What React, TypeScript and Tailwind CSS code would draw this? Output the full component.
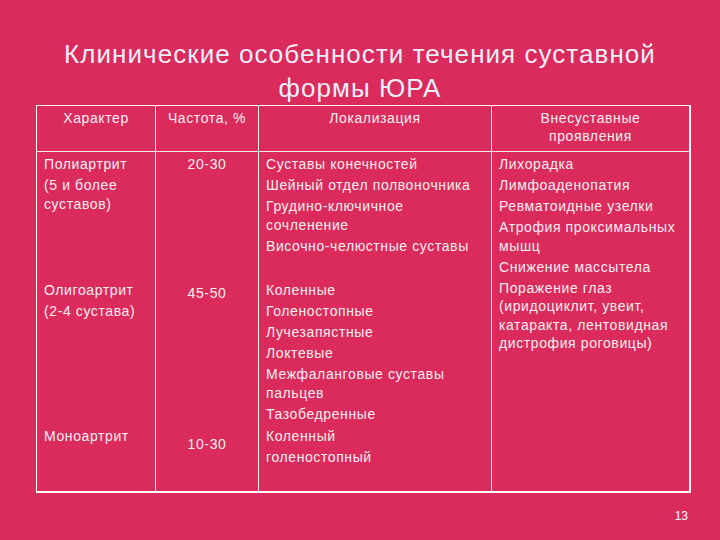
import React from "react";

const font = { fontFamily: '"Liberation Sans", Arial, sans-serif' };

function Lines({ items }: { items: React.ReactNode[] }) {
  return (
    <div className="flex flex-col gap-[2.5px]">
      {items.map((t, i) => (
        <div key={i} className="whitespace-nowrap">{t}</div>
      ))}
    </div>
  );
}

export default function App() {
  const cell = "border-r border-white/90 px-[7px] pt-[3px]";
  return (
    <div
      className="w-[720px] h-[540px] bg-[#db2a5c] flex flex-col text-[#f3eef2] overflow-hidden"
      style={font}
    >
      <div className="h-[105px] pt-[37px] text-center text-[26px] leading-[34px] tracking-[1.05px] text-[#e9eef8]">
        <div>Клинические особенности течения суставной</div>
        <div>формы ЮРА</div>
      </div>

      <div className="ml-[36px] w-[655px] border-t border-l border-b-2 border-r-2 border-white">
        <div className="grid grid-cols-[119px_103px_233px_197px] grid-rows-[46px_126px_146px_67px] text-[14px] leading-[18.5px] tracking-[0.6px]">
          {/* header */}
          <div className="border-r border-b border-white/90 pt-[3px] text-center leading-[18px]">Характер</div>
          <div className="border-r border-b border-white/90 pt-[3px] text-center leading-[18px]">Частота, %</div>
          <div className="border-r border-b border-white/90 pt-[3px] text-center leading-[18px]">Локализация</div>
          <div className="border-b border-white/90 pt-[3px] text-center leading-[18px]">
            Внесуставные
            <br />
            проявления
          </div>

          {/* row 1 */}
          <div className={cell}>
            <Lines items={["Полиартрит", <>(5 и более<br />суставов)</>]} />
          </div>
          <div className={cell + " text-center"}>20-30</div>
          <div className={cell}>
            <Lines
              items={[
                "Суставы конечностей",
                "Шейный отдел полвоночника",
                <>Грудино-ключичное<br />сочленение</>,
                "Височно-челюстные суставы",
              ]}
            />
          </div>
          <div className="row-span-3 px-[7px] pt-[3px]">
            <Lines
              items={[
                "Лихорадка",
                "Лимфоаденопатия",
                "Ревматоидные узелки",
                <>Атрофия проксимальных<br />мышц</>,
                "Снижение массытела",
                <>Поражение глаз<br />(иридоциклит, увеит,<br />катаракта, лентовидная<br />дистрофия роговицы)</>,
              ]}
            />
          </div>

          {/* row 2 */}
          <div className={cell}>
            <Lines items={["Олигоартрит", "(2-4 сустава)"]} />
          </div>
          <div className={cell + " text-center"}>
            <div className="pt-[3px]">45-50</div>
          </div>
          <div className={cell}>
            <Lines
              items={[
                "Коленные",
                "Голеностопные",
                "Лучезапястные",
                "Локтевые",
                <>Межфаланговые суставы<br />пальцев</>,
                "Тазобедренные",
              ]}
            />
          </div>

          {/* row 3 */}
          <div className={cell}>
            <Lines items={["Моноартрит"]} />
          </div>
          <div className={cell + " text-center"}>
            <div className="pt-[8px]">10-30</div>
          </div>
          <div className={cell}>
            <Lines items={["Коленный", "голеностопный"]} />
          </div>
        </div>
      </div>

      <div className="mt-[15px] pr-[32px] text-right text-[12px] leading-[16px] text-white">13</div>
    </div>
  );
}
